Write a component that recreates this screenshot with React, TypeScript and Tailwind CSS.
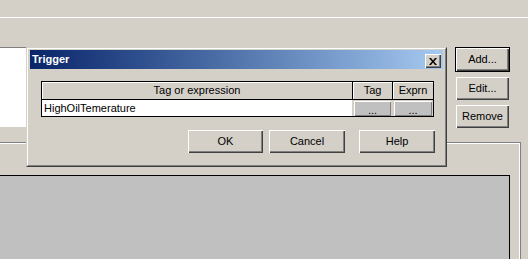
import React from 'react';

const raised =
  'bg-[#d4d0c8] shadow-[inset_1px_1px_0_#ffffff,inset_-1px_-1px_0_#404040,inset_-2px_-2px_0_#808080]';

function Button({ label, className = '' }: { label: string; className?: string }) {
  return (
    <div className={`flex items-center justify-center h-[23px] ${raised} ${className}`}>
      <span className="leading-none">{label}</span>
    </div>
  );
}

function DotsButton() {
  return (
    <div className="h-full p-[1px] pb-0">
      <div className="flex h-full items-end justify-center bg-[#c0c0c0] shadow-[inset_1px_1px_0_#ffffff,inset_-1px_-1px_0_#808080]">
        <span className="leading-[11px]">...</span>
      </div>
    </div>
  );
}

function TriggerDialog() {
  return (
    <div className="absolute left-[26px] top-[47px] w-[421px] h-[120px] border border-t-[#d4d0c8] border-l-[#d4d0c8] border-b-[#404040] border-r-[#404040]">
      <div className="h-full border border-t-white border-l-white border-b-[#808080] border-r-[#808080] bg-[#d4d0c8] px-[2px] pt-[1px]">
        {/* title bar */}
        <div className="flex h-[19px] items-end justify-between bg-linear-to-r from-[#0a246a] to-[#a6caf0] pl-[2px] pr-[2px] pb-[1px]">
          <span className="self-center font-bold text-white">Trigger</span>
          <div className={`flex h-[14px] w-[16px] items-center justify-center ${raised}`}>
            <svg width="8" height="7" viewBox="0 0 8 7">
              <path d="M0 0h2l2 2.5L6 0h2L5 3.5 8 7H6L4 4.5 2 7H0l3-3.5z" fill="#000" />
            </svg>
          </div>
        </div>

        {/* table */}
        <div className="ml-[11px] mt-[12px] w-[393px] border border-black">
          <div className="grid grid-cols-[310px_39px_40px] gap-x-[1px] bg-black">
            <div className="flex h-[17px] items-center justify-center bg-[#d4d0c8] shadow-[inset_1px_1px_0_#ffffff]">
              Tag or expression
            </div>
            <div className="flex h-[17px] items-center justify-center bg-[#d4d0c8] shadow-[inset_1px_1px_0_#ffffff]">
              Tag
            </div>
            <div className="flex h-[17px] items-center justify-center bg-[#d4d0c8] shadow-[inset_1px_1px_0_#ffffff]">
              Exprn
            </div>
          </div>
          <div className="grid grid-cols-[310px_39px_40px] gap-x-[1px] border-t border-black bg-[#d4d0c8]">
            <div className="flex h-[16px] items-center bg-white pl-[2px]">HighOilTemerature</div>
            <DotsButton />
            <DotsButton />
          </div>
        </div>

        {/* buttons */}
        <div className="mt-[13px] flex pl-[158px]">
          <Button label="OK" className="w-[75px]" />
          <Button label="Cancel" className="ml-[6px] w-[76px]" />
          <Button label="Help" className="ml-[14px] w-[76px]" />
        </div>
      </div>
    </div>
  );
}

export default function App() {
  return (
    <div className="relative h-[259px] w-[528px] overflow-hidden bg-[#d4d0c8] text-[11px] text-black font-['Liberation_Sans',Arial,sans-serif]">
      <div className="h-[18px] border-b border-white" />

      <div className="flex h-[124px]">
        <div className="mt-[29px] h-[80px] w-[300px] border-t border-[#808080] bg-white" />
        <div className="ml-auto mr-[18px] mt-[29px] flex w-[55px] flex-col items-center gap-[5px]">
          <div className="border border-black">
            <Button label="Add..." className="w-[53px] h-[22px]" />
          </div>
          <Button label="Edit..." className="w-[53px]" />
          <Button label="Remove" className="w-[53px]" />
        </div>
      </div>

      {/* group frame */}
      <div className="h-[200px] w-[521px] border-t border-r border-[#808080]">
        <div className="h-full border-t border-r border-white">
          <div className="mt-[31px] h-[120px] w-[510px] border-t border-r border-black bg-[#c0c0c0]" />
        </div>
      </div>

      <TriggerDialog />
    </div>
  );
}
